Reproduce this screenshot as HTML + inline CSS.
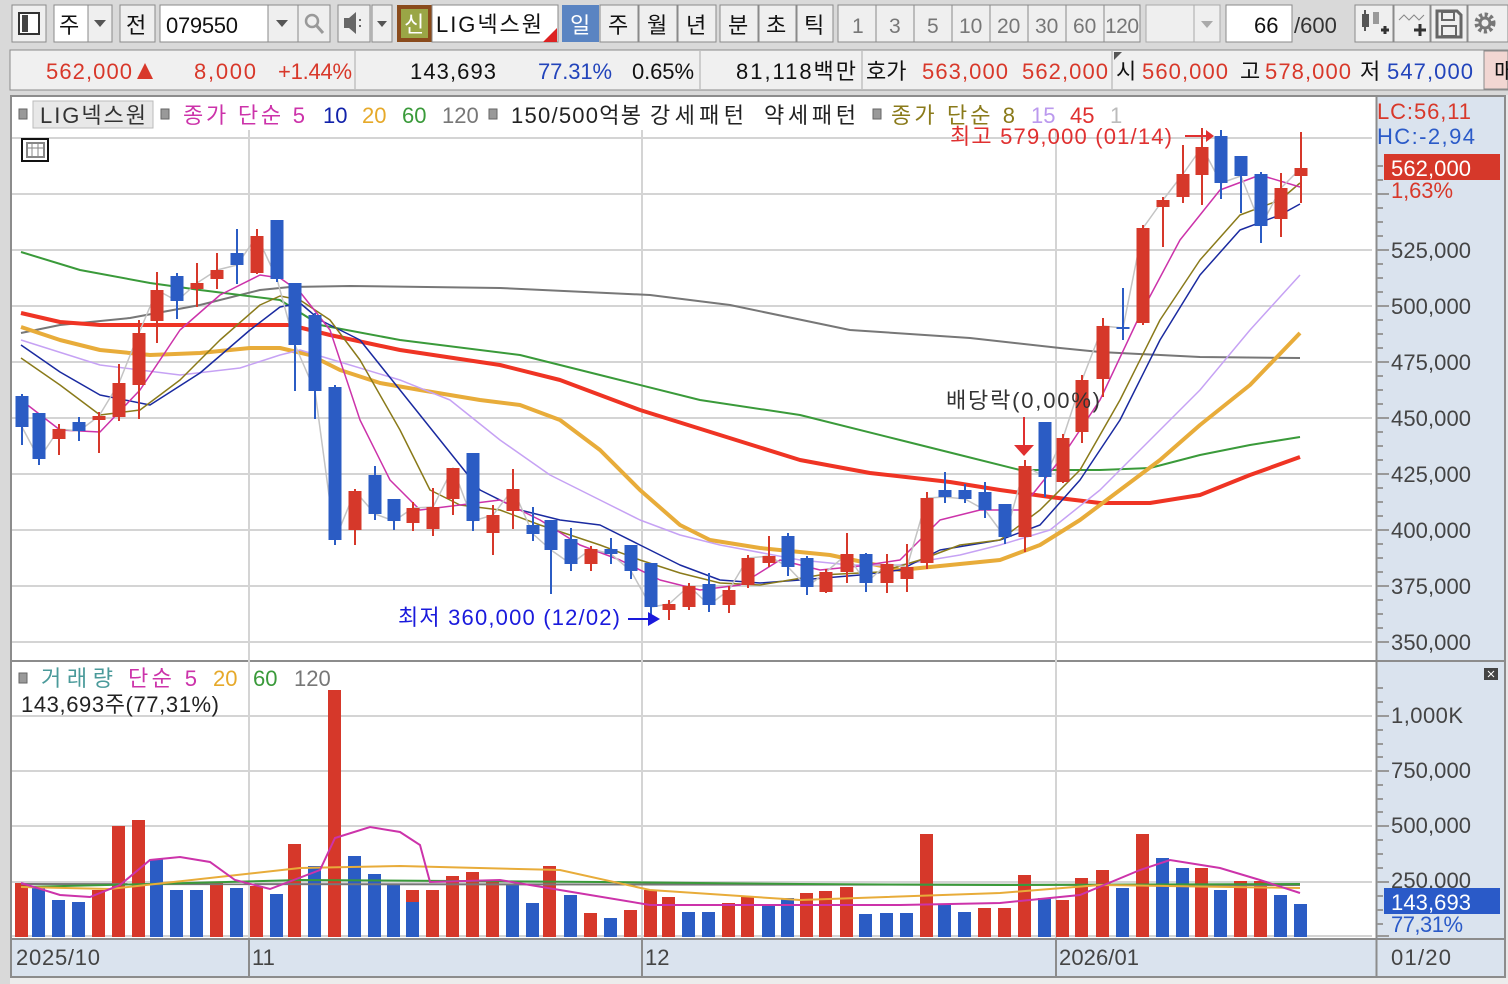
<!DOCTYPE html>
<html><head><meta charset="utf-8"><style>
html,body{margin:0;padding:0;background:#d9d9d9;}
svg{display:block;}
text{font-family:"Liberation Sans","Noto Sans CJK KR",sans-serif;}
</style></head><body>
<svg width="1508" height="984" viewBox="0 0 1508 984" xmlns="http://www.w3.org/2000/svg">
<rect width="1508" height="984" fill="#d9d9d9"/>
<!-- toolbar -->
<g font-size="22" fill="#111">
<rect x="12" y="5" width="34" height="37" fill="#efefef" stroke="#8a8a8a"/>
<rect x="19" y="13" width="20" height="21" fill="#fff" stroke="#333" stroke-width="2"/><rect x="22" y="15" width="6" height="17" fill="#444"/>
<rect x="54" y="5" width="34" height="37" fill="#fff" stroke="#8a8a8a"/><text x="59" y="33">주</text>
<rect x="88" y="5" width="24" height="37" fill="#efefef" stroke="#8a8a8a"/><path d="M94 20h12l-6 7z" fill="#555"/>
<rect x="120" y="5" width="35" height="37" fill="#efefef" stroke="#8a8a8a"/><text x="126" y="33">전</text>
<rect x="160" y="5" width="108" height="37" fill="#fff" stroke="#8a8a8a"/><text x="166" y="33" textLength="72">079550</text>
<rect x="268" y="5" width="30" height="37" fill="#efefef" stroke="#8a8a8a"/><path d="M276 20h12l-6 7z" fill="#555"/>
<rect x="298" y="5" width="32" height="37" fill="#efefef" stroke="#8a8a8a"/><circle cx="312" cy="21" r="6" fill="none" stroke="#999" stroke-width="2.5"/><line x1="316" y1="25" x2="323" y2="33" stroke="#999" stroke-width="3"/>
<rect x="338" y="5" width="32" height="37" fill="#efefef" stroke="#8a8a8a"/><path d="M344 18h5l7-6v22l-7-6h-5z" fill="#666"/><rect x="359" y="19" width="2" height="2" fill="#666"/><rect x="359" y="25" width="2" height="2" fill="#666"/>
<rect x="372" y="5" width="20" height="37" fill="#efefef" stroke="#8a8a8a"/><path d="M377 21h10l-5 6z" fill="#555"/>
<rect x="397" y="5" width="35" height="37" fill="#8a4b1c"/><rect x="401" y="9" width="27" height="29" fill="#9aa646"/><text x="404" y="32" fill="#fff">신</text>
<rect x="432" y="5" width="126" height="37" fill="#fff" stroke="#8a8a8a"/><text x="436" y="32" textLength="106">LIG넥스원</text><path d="M557 28v14h-14z" fill="#d22"/>
<rect x="562" y="5" width="37" height="37" fill="#5a84c2"/><text x="570" y="33" fill="#fff">일</text>
<rect x="600" y="5" width="38" height="37" fill="#efefef" stroke="#8a8a8a"/><text x="608" y="33">주</text>
<rect x="639" y="5" width="38" height="37" fill="#efefef" stroke="#8a8a8a"/><text x="647" y="33">월</text>
<rect x="678" y="5" width="38" height="37" fill="#efefef" stroke="#8a8a8a"/><text x="686" y="33">년</text>
<rect x="720" y="5" width="38" height="37" fill="#efefef" stroke="#8a8a8a"/><text x="728" y="33">분</text>
<rect x="759" y="5" width="37" height="37" fill="#efefef" stroke="#8a8a8a"/><text x="766" y="33">초</text>
<rect x="797" y="5" width="36" height="37" fill="#efefef" stroke="#8a8a8a"/><text x="804" y="33">틱</text>
<g fill="#777" font-size="21">
<rect x="838" y="5" width="38" height="37" fill="#efefef" stroke="#8a8a8a"/><text x="852" y="33">1</text>
<rect x="876" y="5" width="38" height="37" fill="#efefef" stroke="#8a8a8a"/><text x="889" y="33">3</text>
<rect x="914" y="5" width="38" height="37" fill="#efefef" stroke="#8a8a8a"/><text x="927" y="33">5</text>
<rect x="952" y="5" width="38" height="37" fill="#efefef" stroke="#8a8a8a"/><text x="959" y="33">10</text>
<rect x="990" y="5" width="38" height="37" fill="#efefef" stroke="#8a8a8a"/><text x="997" y="33">20</text>
<rect x="1028" y="5" width="38" height="37" fill="#efefef" stroke="#8a8a8a"/><text x="1035" y="33">30</text>
<rect x="1066" y="5" width="38" height="37" fill="#efefef" stroke="#8a8a8a"/><text x="1073" y="33">60</text>
<rect x="1104" y="5" width="36" height="37" fill="#efefef" stroke="#8a8a8a"/><text x="1105" y="33" textLength="34">120</text>
</g>
<rect x="1146" y="5" width="48" height="37" fill="#efefef" stroke="#aaa"/><rect x="1194" y="5" width="26" height="37" fill="#efefef" stroke="#aaa"/><path d="M1201 21h12l-6 7z" fill="#aaa"/>
<rect x="1226" y="5" width="66" height="37" fill="#fff" stroke="#8a8a8a"/><text x="1254" y="33">66</text><text x="1294" y="33" fill="#333">/600</text>
<rect x="1355" y="5" width="38" height="37" fill="#efefef" stroke="#8a8a8a"/><rect x="1362" y="14" width="7" height="13" fill="#555"/><line x1="1365" y1="10" x2="1365" y2="31" stroke="#555" stroke-width="2"/><rect x="1373" y="12" width="6" height="12" fill="#999"/><path d="M1381 30h8M1385 26v8" stroke="#333" stroke-width="3"/>
<rect x="1394" y="5" width="36" height="37" fill="#efefef" stroke="#8a8a8a"/><path d="M1399 20l5-5 5 5 5-5 5 5 5-5" fill="none" stroke="#888"/><path d="M1414 30h12M1420 24v12" stroke="#333" stroke-width="3"/>
<rect x="1431" y="5" width="36" height="37" fill="#efefef" stroke="#8a8a8a"/><path d="M1437 11h20l4 4v22h-24z" fill="none" stroke="#666" stroke-width="3"/><rect x="1442" y="12" width="12" height="8" fill="none" stroke="#666" stroke-width="2"/><rect x="1442" y="26" width="14" height="10" fill="none" stroke="#666" stroke-width="2"/>
<rect x="1468" y="5" width="40" height="37" fill="#efefef" stroke="#8a8a8a"/><circle cx="1485" cy="23" r="8" fill="none" stroke="#777" stroke-width="5" stroke-dasharray="3 2.3"/><circle cx="1485" cy="23" r="5" fill="none" stroke="#777" stroke-width="3"/>
</g>
<!-- info bar -->
<rect x="10" y="50" width="1498" height="40" fill="#f0f0f0" stroke="#8a8a8a"/>
<g font-size="22" fill="#d8382a">
<text x="46" y="79" textLength="86">562,000</text><path d="M137 79l8-16 8 16z"/>
<text x="194" y="79" textLength="62">8,000</text>
<text x="278" y="79" textLength="74">+1.44%</text>
<line x1="355" y1="51" x2="355" y2="89" stroke="#aaa"/>
<text x="410" y="79" fill="#111" textLength="86">143,693</text>
<text x="538" y="79" fill="#2244bb" textLength="74">77.31%</text>
<text x="632" y="79" fill="#111" textLength="62">0.65%</text>
<line x1="700" y1="51" x2="700" y2="89" stroke="#aaa"/>
<text x="736" y="79" fill="#111" textLength="120">81,118백만</text>
<line x1="862" y1="51" x2="862" y2="89" stroke="#aaa"/>
<text x="866" y="79" fill="#111">호가</text>
<text x="922" y="79" textLength="86">563,000</text>
<text x="1022" y="79" textLength="86">562,000</text>
<line x1="1112" y1="51" x2="1112" y2="89" stroke="#aaa"/><path d="M1114 52h8l-8 8z" fill="#555"/>
<text x="1116" y="79" fill="#111">시</text>
<text x="1142" y="79" textLength="86">560,000</text>
<text x="1240" y="79" fill="#111">고</text>
<text x="1265" y="79" textLength="86">578,000</text>
<text x="1360" y="79" fill="#111">저</text>
<text x="1387" y="79" fill="#2244bb" textLength="86">547,000</text>
<rect x="1484" y="51" width="24" height="38" fill="#f2d6d2" stroke="#8a8a8a"/><text x="1494" y="79" fill="#111">매</text>
</g>
<!-- chart frame -->
<rect x="10" y="95" width="1498" height="889" fill="#e8e8e8"/>
<rect x="12" y="97" width="1364" height="563" fill="#fff"/>
<rect x="12" y="662" width="1364" height="276" fill="#fff"/>
<rect x="1377" y="97" width="127" height="841" fill="#dae3ee"/>
<rect x="12" y="940" width="1492" height="36" fill="#dae3ee"/>
<g stroke="#8c8c8c" stroke-width="2" fill="none">
<rect x="11" y="96" width="1494" height="881"/>
<line x1="12" y1="661" x2="1504" y2="661"/>
<line x1="12" y1="939" x2="1504" y2="939"/>
<line x1="1376.5" y1="97" x2="1376.5" y2="977"/>
</g>
<!-- grids -->
<g stroke="#d4d4d4" stroke-width="2">
<line x1="12" y1="138" x2="1372" y2="138"/><line x1="12" y1="194" x2="1372" y2="194"/><line x1="12" y1="250" x2="1372" y2="250"/><line x1="12" y1="306" x2="1372" y2="306"/><line x1="12" y1="362" x2="1372" y2="362"/><line x1="12" y1="418" x2="1372" y2="418"/><line x1="12" y1="474" x2="1372" y2="474"/><line x1="12" y1="530" x2="1372" y2="530"/><line x1="12" y1="586" x2="1372" y2="586"/><line x1="12" y1="642" x2="1372" y2="642"/>
<line x1="12" y1="716" x2="1372" y2="716"/><line x1="12" y1="771" x2="1372" y2="771"/><line x1="12" y1="826" x2="1372" y2="826"/><line x1="12" y1="882" x2="1372" y2="882"/><line x1="12" y1="936" x2="1372" y2="936"/>
<line x1="249" y1="130" x2="249" y2="938"/><line x1="642" y1="130" x2="642" y2="938"/><line x1="1056" y1="130" x2="1056" y2="938"/>
</g>
<g stroke="#8c8c8c" stroke-width="2">
<line x1="249" y1="940" x2="249" y2="976"/><line x1="642" y1="940" x2="642" y2="976"/><line x1="1056" y1="940" x2="1056" y2="976"/>
</g>
<!-- axis ticks -->
<g stroke="#999" stroke-width="2">
<path d="M1377 166h6M1377 180h6M1377 208h6M1377 222h6M1377 236h6M1377 264h6M1377 278h6M1377 292h6M1377 320h6M1377 334h6M1377 348h6M1377 376h6M1377 390h6M1377 404h6M1377 432h6M1377 446h6M1377 460h6M1377 488h6M1377 502h6M1377 516h6M1377 544h6M1377 558h6M1377 572h6M1377 600h6M1377 614h6M1377 628h6"/>
<path d="M1377 194h12M1377 250h12M1377 306h12M1377 362h12M1377 418h12M1377 474h12M1377 530h12M1377 586h12M1377 642h12"/>
<path d="M1377 688h6M1377 702h6M1377 730h6M1377 744h6M1377 757h6M1377 785h6M1377 799h6M1377 812h6M1377 840h6M1377 854h6M1377 868h6M1377 896h6M1377 910h6M1377 924h6"/>
<path d="M1377 716h12M1377 771h12M1377 826h12M1377 882h12M1377 936h12"/>
</g>
<g font-size="22" fill="#444">
<text x="1391" y="258" textLength="80">525,000</text><text x="1391" y="314" textLength="80">500,000</text><text x="1391" y="370" textLength="80">475,000</text><text x="1391" y="426" textLength="80">450,000</text><text x="1391" y="482" textLength="80">425,000</text><text x="1391" y="538" textLength="80">400,000</text><text x="1391" y="594" textLength="80">375,000</text><text x="1391" y="650" textLength="80">350,000</text>
<text x="1391" y="723" textLength="72">1,000K</text><text x="1391" y="778" textLength="80">750,000</text><text x="1391" y="833" textLength="80">500,000</text><text x="1391" y="888" textLength="80">250,000</text>
<text x="1391" y="965" textLength="60">01/20</text>
<text x="16" y="965" textLength="84">2025/10</text><text x="252" y="965">11</text><text x="645" y="965">12</text><text x="1059" y="965" textLength="80">2026/01</text>
</g>
<text x="1377" y="119" font-size="22" fill="#d8382a" textLength="94">LC:56,11</text>
<text x="1377" y="144" font-size="22" fill="#2a5ac8" textLength="98">HC:-2,94</text>
<rect x="1384" y="154" width="116" height="26" fill="#d6382a"/>
<text x="1391" y="176" font-size="22" fill="#fff" textLength="80">562,000</text>
<text x="1391" y="198" font-size="22" fill="#d8382a" textLength="62">1,63%</text>
<rect x="1384" y="888" width="116" height="26" fill="#2a5ac8"/>
<text x="1391" y="910" font-size="22" fill="#fff" textLength="80">143,693</text>
<text x="1391" y="932" font-size="22" fill="#2a5ac8" textLength="72">77,31%</text>
<rect x="1484" y="668" width="14" height="12" fill="#444"/><path d="M1488 671l6 6M1494 671l-6 6" stroke="#fff"/>
<!-- legend -->
<g font-size="22">
<rect x="19" y="109" width="8" height="10" fill="#999" stroke="#666"/>
<rect x="33" y="101" width="120" height="27" fill="#e8e8e8" stroke="#bbb"/>
<text x="40" y="123" fill="#333" textLength="106">LIG넥스원</text>
<rect x="161" y="109" width="8" height="10" fill="#999" stroke="#666"/>
<text x="183" y="123" fill="#cc33aa" textLength="122">종가 단순 5</text>
<text x="323" y="123" fill="#1122aa">10</text><text x="362" y="123" fill="#e6a92a">20</text><text x="402" y="123" fill="#3a9a3a">60</text><text x="442" y="123" fill="#777">120</text>
<rect x="489" y="109" width="8" height="10" fill="#999" stroke="#666"/>
<text x="511" y="123" fill="#222" textLength="130">150/500억봉</text>
<text x="650" y="123" fill="#222" textLength="94">강세패턴</text><text x="764" y="123" fill="#222" textLength="92">약세패턴</text>
<rect x="873" y="109" width="8" height="10" fill="#999" stroke="#666"/>
<text x="891" y="123" fill="#8a7a1a" textLength="124">종가 단순 8</text>
<text x="1031" y="123" fill="#bb99ee">15</text><text x="1070" y="123" fill="#e03030">45</text><text x="1110" y="123" fill="#bbb">1</text>
<rect x="22" y="139" width="26" height="22" fill="#fff" stroke="#111" stroke-width="2"/><rect x="27" y="143" width="17" height="14" fill="none" stroke="#888" stroke-width="2"/><path d="M32 143v14M38 143v14M27 148h17" stroke="#888"/>
<rect x="19" y="673" width="8" height="10" fill="#999" stroke="#666"/>
<text x="41" y="686" fill="#4a9a9a" textLength="72">거래량</text><text x="128" y="686" fill="#cc33aa" textLength="69">단순 5</text><text x="213" y="686" fill="#e6a92a">20</text><text x="253" y="686" fill="#3a9a3a">60</text><text x="294" y="686" fill="#777">120</text>
<text x="21" y="712" fill="#222" textLength="198">143,693주(77,31%)</text>
</g>
<!-- MA lines -->
<g fill="none" stroke-linejoin="round">
<polyline stroke="#777" stroke-width="2" points="21,333 60,325 130,318 200,305 260,290 290,287 350,286 500,288 650,295 730,305 850,330 970,338 1060,348 1100,352 1200,357 1300,358"/>
<polyline stroke="#3a9a3a" stroke-width="2" points="21,252 80,270 150,283 200,290 280,300 320,325 400,340 520,355 600,375 700,400 800,415 900,440 960,455 1020,470 1100,470 1150,468 1200,455 1250,445 1300,437"/>
<polyline stroke="#ef3424" stroke-width="4" points="21,313 60,322 100,325 200,325 290,325 330,335 400,350 500,365 560,380 640,410 720,435 800,460 870,473 950,482 1000,490 1050,497 1100,503 1150,503 1200,495 1250,475 1300,457"/>
<polyline stroke="#e8ac3a" stroke-width="4" points="21,327 60,340 100,350 150,355 200,353 250,348 280,348 310,355 340,370 380,383 420,390 480,400 520,405 560,420 600,450 640,490 680,525 710,540 760,548 830,555 900,570 950,565 1000,560 1040,545 1080,520 1120,490 1160,460 1200,425 1250,385 1300,333"/>
<polyline stroke="#c6a2f4" stroke-width="1.5" points="21,340 100,365 180,375 240,368 280,355 300,350 340,362 400,380 450,400 500,440 550,475 600,500 640,520 680,535 720,545 800,560 850,565 900,565 960,555 1000,545 1050,530 1100,490 1150,440 1200,390 1250,330 1300,275"/>
<polyline stroke="#1a2aa0" stroke-width="1.5" points="21,345 60,372 100,395 150,405 200,373 250,330 280,307 300,303 320,320 360,340 400,390 440,440 480,490 520,510 560,520 600,525 640,545 680,565 720,580 760,583 800,580 860,575 900,570 940,550 1000,540 1040,525 1080,480 1120,420 1160,340 1200,275 1240,230 1280,215 1300,204"/>
<polyline stroke="#8a7a1a" stroke-width="1.5" points="21,358 60,385 100,415 140,410 180,380 220,340 260,305 280,296 300,300 330,320 360,360 400,430 430,490 460,505 500,510 540,525 600,545 640,560 680,573 720,583 760,585 820,575 880,572 920,560 960,545 1000,540 1040,510 1080,470 1120,400 1160,320 1200,260 1240,215 1280,200 1300,183"/>
<polyline stroke="#cc33aa" stroke-width="1.5" points="21,400 60,430 100,432 140,390 180,330 220,295 260,275 280,278 300,292 330,330 360,420 390,480 420,510 460,505 500,500 540,520 580,545 620,560 660,580 700,590 740,585 780,560 820,570 860,566 900,560 940,520 980,510 1020,510 1060,460 1100,400 1140,315 1180,240 1220,190 1260,175 1300,187"/>
<polyline stroke="#c4c4c4" stroke-width="1.5" points="22,427 39,459 59,429 79,431 99,416 119,383 139,333 157,290 177,301 197,283 217,270 237,265 257,236 277,279 295,345 315,391 335,540 355,491 375,514 394,521 413,508 433,507 453,468 473,521 493,515 513,489 533,534 551,550 571,564 591,549 611,554 631,571 651,607 669,604 689,586 709,605 729,590 748,558 769,556 788,567 807,587 826,572 847,554 866,583 887,564 907,567 927,498 945,497 965,499 985,510 1005,537 1025,466 1045,477 1063,438 1082,380 1103,326 1123,328 1143,228 1163,200 1183,174 1202,147 1221,183 1241,176 1261,226 1281,188 1301,168"/>
</g>
<!-- candles -->
<g>
<g fill="#2b5cc4" stroke="#2b5cc4" stroke-width="2">
<line x1="22" y1="394" x2="22" y2="445"/><rect x="15.5" y="396" width="13" height="31" stroke="none"/>
<line x1="39" y1="413" x2="39" y2="465"/><rect x="32.5" y="413" width="13" height="46" stroke="none"/>
<line x1="79" y1="417" x2="79" y2="441"/><rect x="72.5" y="422" width="13" height="9" stroke="none"/>
<line x1="177" y1="273" x2="177" y2="319"/><rect x="170.5" y="276" width="13" height="25" stroke="none"/>
<line x1="237" y1="229" x2="237" y2="284"/><rect x="230.5" y="253" width="13" height="12" stroke="none"/>
<line x1="277" y1="220" x2="277" y2="282"/><rect x="270.5" y="220" width="13" height="59" stroke="none"/>
<line x1="295" y1="283" x2="295" y2="391"/><rect x="288.5" y="283" width="13" height="62" stroke="none"/>
<line x1="315" y1="313" x2="315" y2="419"/><rect x="308.5" y="315" width="13" height="76" stroke="none"/>
<line x1="335" y1="385" x2="335" y2="545"/><rect x="328.5" y="387" width="13" height="153" stroke="none"/>
<line x1="375" y1="466" x2="375" y2="520"/><rect x="368.5" y="475" width="13" height="39" stroke="none"/>
<line x1="394" y1="499" x2="394" y2="530"/><rect x="387.5" y="499" width="13" height="22" stroke="none"/>
<line x1="473" y1="453" x2="473" y2="531"/><rect x="466.5" y="453" width="13" height="68" stroke="none"/>
<line x1="533" y1="507" x2="533" y2="541"/><rect x="526.5" y="525" width="13" height="9" stroke="none"/>
<line x1="551" y1="520" x2="551" y2="594"/><rect x="544.5" y="520" width="13" height="30" stroke="none"/>
<line x1="571" y1="528" x2="571" y2="571"/><rect x="564.5" y="539" width="13" height="25" stroke="none"/>
<line x1="611" y1="538" x2="611" y2="564"/><rect x="604.5" y="549" width="13" height="5" stroke="none"/>
<line x1="631" y1="545" x2="631" y2="579"/><rect x="624.5" y="545" width="13" height="26" stroke="none"/>
<line x1="651" y1="563" x2="651" y2="618"/><rect x="644.5" y="563" width="13" height="44" stroke="none"/>
<line x1="709" y1="573" x2="709" y2="612"/><rect x="702.5" y="584" width="13" height="21" stroke="none"/>
<line x1="788" y1="533" x2="788" y2="576"/><rect x="781.5" y="536" width="13" height="31" stroke="none"/>
<line x1="807" y1="556" x2="807" y2="595"/><rect x="800.5" y="558" width="13" height="29" stroke="none"/>
<line x1="866" y1="553" x2="866" y2="592"/><rect x="859.5" y="554" width="13" height="29" stroke="none"/>
<line x1="945" y1="472" x2="945" y2="503"/><rect x="938.5" y="490" width="13" height="7" stroke="none"/>
<line x1="965" y1="484" x2="965" y2="503"/><rect x="958.5" y="490" width="13" height="9" stroke="none"/>
<line x1="985" y1="482" x2="985" y2="518"/><rect x="978.5" y="492" width="13" height="18" stroke="none"/>
<line x1="1005" y1="504" x2="1005" y2="544"/><rect x="998.5" y="504" width="13" height="33" stroke="none"/>
<line x1="1045" y1="422" x2="1045" y2="497"/><rect x="1038.5" y="422" width="13" height="55" stroke="none"/>
<line x1="1123" y1="288" x2="1123" y2="340"/><rect x="1116.5" y="327" width="13" height="2" stroke="none"/>
<line x1="1221" y1="130" x2="1221" y2="199"/><rect x="1214.5" y="136" width="13" height="47" stroke="none"/>
<line x1="1241" y1="156" x2="1241" y2="213"/><rect x="1234.5" y="156" width="13" height="20" stroke="none"/>
<line x1="1261" y1="172" x2="1261" y2="243"/><rect x="1254.5" y="174" width="13" height="52" stroke="none"/>
</g>
<g fill="#d6382a" stroke="#d6382a" stroke-width="2">
<line x1="59" y1="424" x2="59" y2="455"/><rect x="52.5" y="429" width="13" height="10" stroke="none"/>
<line x1="99" y1="412" x2="99" y2="453"/><rect x="92.5" y="416" width="13" height="4" stroke="none"/>
<line x1="119" y1="364" x2="119" y2="421"/><rect x="112.5" y="383" width="13" height="34" stroke="none"/>
<line x1="139" y1="320" x2="139" y2="419"/><rect x="132.5" y="333" width="13" height="52" stroke="none"/>
<line x1="157" y1="272" x2="157" y2="343"/><rect x="150.5" y="290" width="13" height="31" stroke="none"/>
<line x1="197" y1="263" x2="197" y2="307"/><rect x="190.5" y="283" width="13" height="6" stroke="none"/>
<line x1="217" y1="253" x2="217" y2="289"/><rect x="210.5" y="270" width="13" height="9" stroke="none"/>
<line x1="257" y1="229" x2="257" y2="274"/><rect x="250.5" y="236" width="13" height="37" stroke="none"/>
<line x1="355" y1="489" x2="355" y2="545"/><rect x="348.5" y="491" width="13" height="39" stroke="none"/>
<line x1="413" y1="502" x2="413" y2="531"/><rect x="406.5" y="508" width="13" height="15" stroke="none"/>
<line x1="433" y1="488" x2="433" y2="536"/><rect x="426.5" y="507" width="13" height="22" stroke="none"/>
<line x1="453" y1="468" x2="453" y2="515"/><rect x="446.5" y="468" width="13" height="31" stroke="none"/>
<line x1="493" y1="505" x2="493" y2="555"/><rect x="486.5" y="515" width="13" height="18" stroke="none"/>
<line x1="513" y1="469" x2="513" y2="529"/><rect x="506.5" y="489" width="13" height="22" stroke="none"/>
<line x1="591" y1="546" x2="591" y2="571"/><rect x="584.5" y="549" width="13" height="15" stroke="none"/>
<line x1="669" y1="600" x2="669" y2="620"/><rect x="662.5" y="604" width="13" height="6" stroke="none"/>
<line x1="689" y1="583" x2="689" y2="610"/><rect x="682.5" y="586" width="13" height="21" stroke="none"/>
<line x1="729" y1="586" x2="729" y2="613"/><rect x="722.5" y="590" width="13" height="15" stroke="none"/>
<line x1="748" y1="555" x2="748" y2="588"/><rect x="741.5" y="558" width="13" height="27" stroke="none"/>
<line x1="769" y1="536" x2="769" y2="567"/><rect x="762.5" y="556" width="13" height="7" stroke="none"/>
<line x1="826" y1="569" x2="826" y2="593"/><rect x="819.5" y="572" width="13" height="20" stroke="none"/>
<line x1="847" y1="533" x2="847" y2="583"/><rect x="840.5" y="554" width="13" height="18" stroke="none"/>
<line x1="887" y1="554" x2="887" y2="593"/><rect x="880.5" y="564" width="13" height="19" stroke="none"/>
<line x1="907" y1="544" x2="907" y2="592"/><rect x="900.5" y="567" width="13" height="12" stroke="none"/>
<line x1="927" y1="492" x2="927" y2="569"/><rect x="920.5" y="498" width="13" height="65" stroke="none"/>
<line x1="1025" y1="460" x2="1025" y2="552"/><rect x="1018.5" y="466" width="13" height="71" stroke="none"/>
<line x1="1063" y1="434" x2="1063" y2="483"/><rect x="1056.5" y="438" width="13" height="44" stroke="none"/>
<line x1="1082" y1="375" x2="1082" y2="443"/><rect x="1075.5" y="380" width="13" height="52" stroke="none"/>
<line x1="1103" y1="318" x2="1103" y2="397"/><rect x="1096.5" y="326" width="13" height="53" stroke="none"/>
<line x1="1143" y1="225" x2="1143" y2="325"/><rect x="1136.5" y="228" width="13" height="95" stroke="none"/>
<line x1="1163" y1="197" x2="1163" y2="247"/><rect x="1156.5" y="200" width="13" height="7" stroke="none"/>
<line x1="1183" y1="145" x2="1183" y2="203"/><rect x="1176.5" y="174" width="13" height="23" stroke="none"/>
<line x1="1202" y1="128" x2="1202" y2="205"/><rect x="1195.5" y="147" width="13" height="28" stroke="none"/>
<line x1="1281" y1="173" x2="1281" y2="237"/><rect x="1274.5" y="188" width="13" height="31" stroke="none"/>
<line x1="1301" y1="132" x2="1301" y2="203"/><rect x="1294.5" y="168" width="13" height="8" stroke="none"/>
</g>
</g>
<!-- annotations -->
<text x="950" y="144" font-size="22" fill="#e03030" textLength="222">최고 579,000 (01/14)</text>
<path d="M1185 136h25" stroke="#e03030" stroke-width="2"/><path d="M1206 130l8 6-8 6z" fill="#e03030"/>
<text x="398" y="625" font-size="22" fill="#1a1adc" textLength="222">최저 360,000 (12/02)</text>
<path d="M628 619h22" stroke="#1a1adc" stroke-width="2"/><path d="M648 612l12 7-12 7z" fill="#1a1adc"/>
<text x="946" y="408" font-size="22" fill="#333" textLength="154">배당락(0,00%)</text>
<path d="M1024 417v28" stroke="#e03030" stroke-width="2"/><path d="M1014 445h20l-10 11z" fill="#e03030"/>
<!-- volume bars -->
<g fill="#d6382a">
<rect x="15" y="883" width="13" height="54"/><rect x="92" y="890" width="13" height="47"/><rect x="112" y="826" width="13" height="111"/><rect x="132" y="820" width="13" height="117"/><rect x="210" y="883" width="13" height="54"/><rect x="250" y="886" width="13" height="51"/><rect x="288" y="844" width="13" height="93"/><rect x="328" y="690" width="13" height="247"/><rect x="406" y="890" width="13" height="47"/><rect x="426" y="890" width="13" height="47"/><rect x="446" y="876" width="13" height="61"/><rect x="466" y="872" width="13" height="65"/><rect x="486" y="882" width="13" height="55"/><rect x="543" y="866" width="13" height="71"/><rect x="584" y="913" width="13" height="24"/><rect x="624" y="910" width="13" height="27"/><rect x="644" y="890" width="13" height="47"/><rect x="662" y="897" width="13" height="40"/><rect x="722" y="903" width="13" height="34"/><rect x="741" y="897" width="13" height="40"/><rect x="819" y="891" width="13" height="46"/><rect x="800" y="893" width="13" height="44"/><rect x="840" y="887" width="13" height="50"/><rect x="920" y="834" width="13" height="103"/><rect x="978" y="908" width="13" height="29"/><rect x="998" y="908" width="13" height="29"/><rect x="1018" y="875" width="13" height="62"/><rect x="1056" y="900" width="13" height="37"/><rect x="1075" y="878" width="13" height="59"/><rect x="1096" y="870" width="13" height="67"/><rect x="1136" y="834" width="13" height="103"/><rect x="1234" y="881" width="13" height="56"/><rect x="1254" y="881" width="13" height="56"/><rect x="1195" y="868" width="13" height="69"/>
</g>
<g fill="#2b5cc4">
<rect x="32" y="887" width="13" height="50"/><rect x="52" y="900" width="13" height="37"/><rect x="72" y="902" width="13" height="35"/><rect x="150" y="859" width="13" height="78"/><rect x="170" y="890" width="13" height="47"/><rect x="190" y="890" width="13" height="47"/><rect x="230" y="888" width="13" height="49"/><rect x="270" y="894" width="13" height="43"/><rect x="308" y="866" width="13" height="71"/><rect x="348" y="856" width="13" height="81"/><rect x="368" y="874" width="13" height="63"/><rect x="387" y="884" width="13" height="53"/><rect x="406" y="902" width="13" height="35"/><rect x="506" y="885" width="13" height="52"/><rect x="526" y="903" width="13" height="34"/><rect x="564" y="895" width="13" height="42"/><rect x="604" y="918" width="13" height="19"/><rect x="682" y="912" width="13" height="25"/><rect x="702" y="912" width="13" height="25"/><rect x="762" y="906" width="13" height="31"/><rect x="781" y="898" width="13" height="39"/><rect x="859" y="914" width="13" height="23"/><rect x="880" y="913" width="13" height="24"/><rect x="900" y="913" width="13" height="24"/><rect x="938" y="905" width="13" height="32"/><rect x="958" y="912" width="13" height="25"/><rect x="1038" y="898" width="13" height="39"/><rect x="1116" y="888" width="13" height="49"/><rect x="1156" y="858" width="13" height="79"/><rect x="1176" y="868" width="13" height="69"/><rect x="1214" y="890" width="13" height="47"/><rect x="1274" y="895" width="13" height="42"/><rect x="1294" y="904" width="13" height="33"/>
</g>
<g fill="none" stroke-width="2">
<polyline stroke="#777" points="21,884 1300,885"/>
<polyline stroke="#3a9a3a" points="21,887 150,884 300,880 600,882 800,884 1000,885 1300,884"/>
<polyline stroke="#e8ac3a" points="21,887 110,889 300,868 400,866 560,870 650,890 800,900 1000,893 1100,885 1300,888"/>
<polyline stroke="#cc33aa" points="21,883 60,895 90,897 120,885 150,860 180,857 210,862 235,880 270,889 320,870 335,838 370,827 400,832 420,845 430,882 500,880 560,890 650,905 760,905 900,905 1000,903 1080,895 1140,870 1170,860 1220,868 1260,880 1300,893"/>
</g>
<!-- bottom strip -->
<rect x="10" y="978" width="1498" height="6" fill="#ececec"/>
</svg>
</body></html>
